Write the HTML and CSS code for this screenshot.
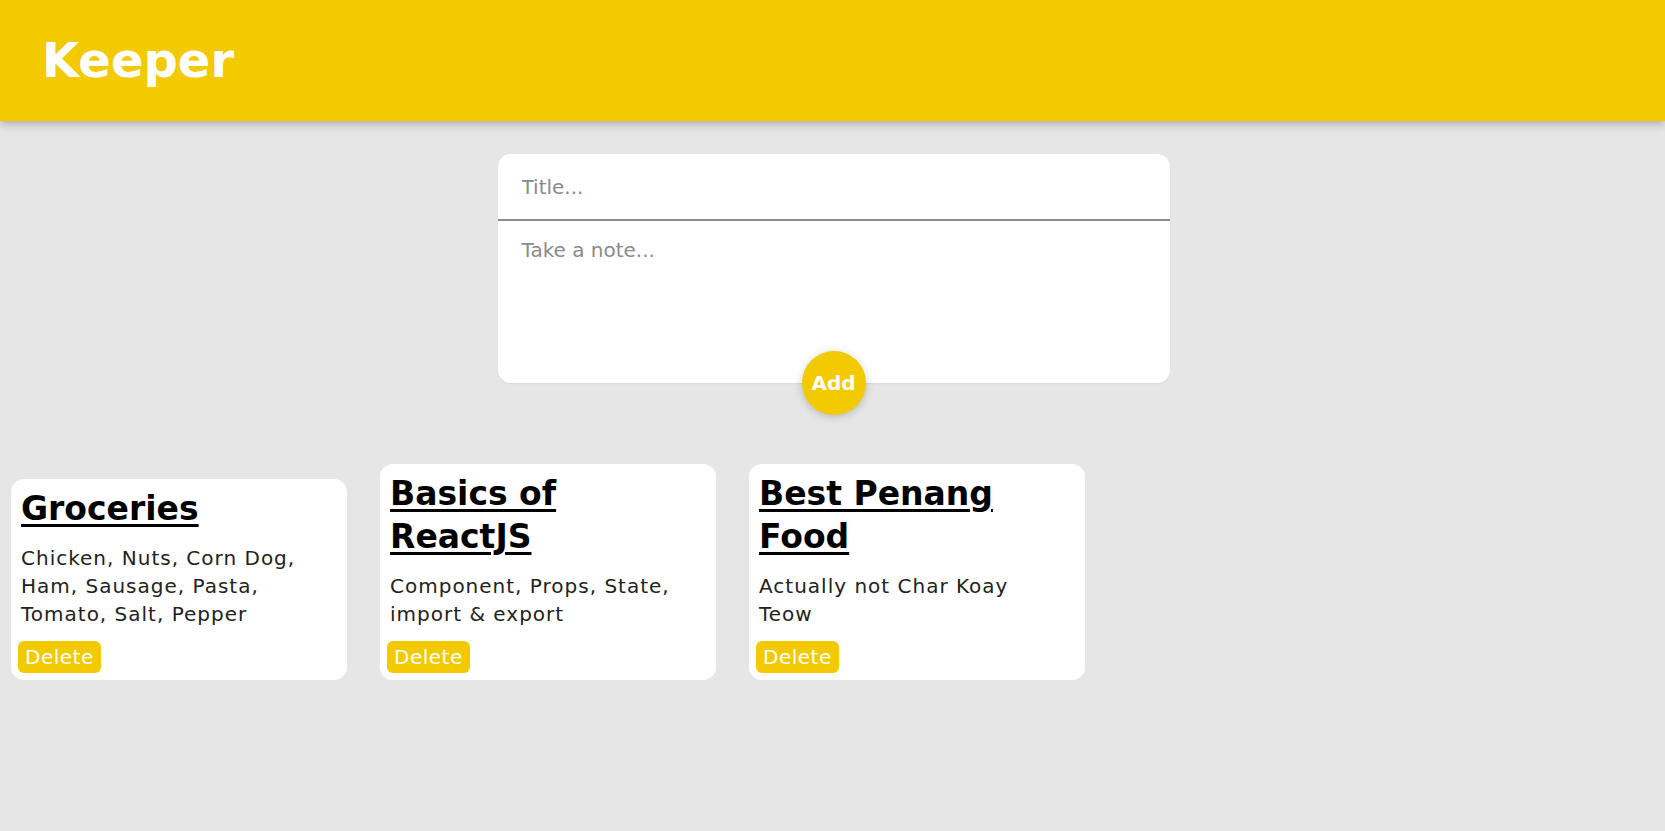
FILE: index.html
```html
<!DOCTYPE html>
<html lang="en">
<head>
<meta charset="utf-8">
<title>Keeper</title>
<link rel="stylesheet" href="styles.css">
</head>
<body>
<header class="app-header">
  <h1 class="app-title">Keeper</h1>
</header>
<main class="app-main">
  <form class="create-note">
    <input class="create-title" type="text" placeholder="Title...">
    <textarea class="create-content" placeholder="Take a note..."></textarea>
    <button class="add-btn" type="button">Add</button>
  </form>
  <section class="notes">
    <article class="note">
      <h2 class="note-title">Groceries</h2>
      <p class="note-body">Chicken, Nuts, Corn Dog, Ham, Sausage, Pasta, Tomato, Salt, Pepper</p>
      <button class="delete-btn" type="button">Delete</button>
    </article>
    <article class="note">
      <h2 class="note-title">Basics of ReactJS</h2>
      <p class="note-body">Component, Props, State, import &amp; export</p>
      <button class="delete-btn" type="button">Delete</button>
    </article>
    <article class="note">
      <h2 class="note-title">Best Penang Food</h2>
      <p class="note-body">Actually not Char Koay Teow</p>
      <button class="delete-btn" type="button">Delete</button>
    </article>
  </section>
</main>
</body>
</html>
```

FILE: styles.css
```css
* {
  box-sizing: border-box;
}

html, body {
  margin: 0;
  padding: 0;
}

body {
  background: #e6e6e6;
  font-family: "DejaVu Sans", "Open Sans", sans-serif;
  min-height: 831px;
}

.app-header {
  height: 121px;
  background: #f3c900;
  padding: 37px 0 0 42px;
  box-shadow: 0 2px 10px rgba(0, 0, 0, 0.3);
  position: relative;
  z-index: 1;
}

.app-title {
  margin: 0;
  color: #ffffff;
  font-size: 48px;
  line-height: 47px;
  font-weight: 700;
}

.app-main {
  padding-top: 33px;
}

.create-note {
  position: relative;
  width: 672px;
  margin: 0 auto;
  left: 1px;
  background: #ffffff;
  border-radius: 13px;
  display: flex;
  flex-direction: column;
  box-shadow: 0 1px 2px rgba(0, 0, 0, 0.06);
}

.create-title,
.create-content {
  font-family: inherit;
  font-size: 20px;
  color: #333;
  border: none;
  outline: none;
  background: transparent;
  width: 100%;
  margin: 0;
}

.create-title {
  height: 67px;
  padding: 0 24px;
  border-bottom: 2px solid #8c8c8c;
  border-radius: 13px 13px 0 0;
}

.create-content {
  height: 162px;
  padding: 17px 24px 0 24px;
  resize: none;
  line-height: normal;
  border-radius: 0 0 13px 13px;
}

.create-title::placeholder,
.create-content::placeholder {
  color: #8a8a8a;
}

.add-btn {
  position: absolute;
  left: 50%;
  bottom: -32px;
  width: 64px;
  height: 64px;
  margin-left: -32px;
  border: none;
  border-radius: 50%;
  background: #f3c900;
  color: #ffffff;
  font-family: inherit;
  font-size: 20px;
  font-weight: 700;
  padding: 0;
  box-shadow: 0 2px 8px rgba(0, 0, 0, 0.2);
}

.notes {
  display: flex;
  align-items: flex-end;
  gap: 33px;
  padding-left: 11px;
  margin-top: 81px;
}

.note {
  width: 336px;
  background: #ffffff;
  border-radius: 13px;
  padding: 8px 7px 7px 7px;
}

.note-title {
  margin: 0 0 13px 0;
  padding: 0 13px 0 3px;
  font-size: 33px;
  line-height: 43.3px;
  font-weight: 700;
  color: #000;
  text-decoration: underline;
  text-decoration-thickness: 3px;
  text-underline-offset: 4px;
}

.note-body {
  margin: 0 0 13px 0;
  padding: 0 14px 0 3px;
  font-size: 20px;
  line-height: 28px;
  letter-spacing: 1px;
  color: #222;
}

.delete-btn {
  display: block;
  height: 32px;
  padding: 0 7px;
  border: none;
  border-radius: 6px;
  background: #f3c900;
  color: #ffffff;
  font-family: inherit;
  font-size: 20px;
  letter-spacing: 0.5px;
}
```
